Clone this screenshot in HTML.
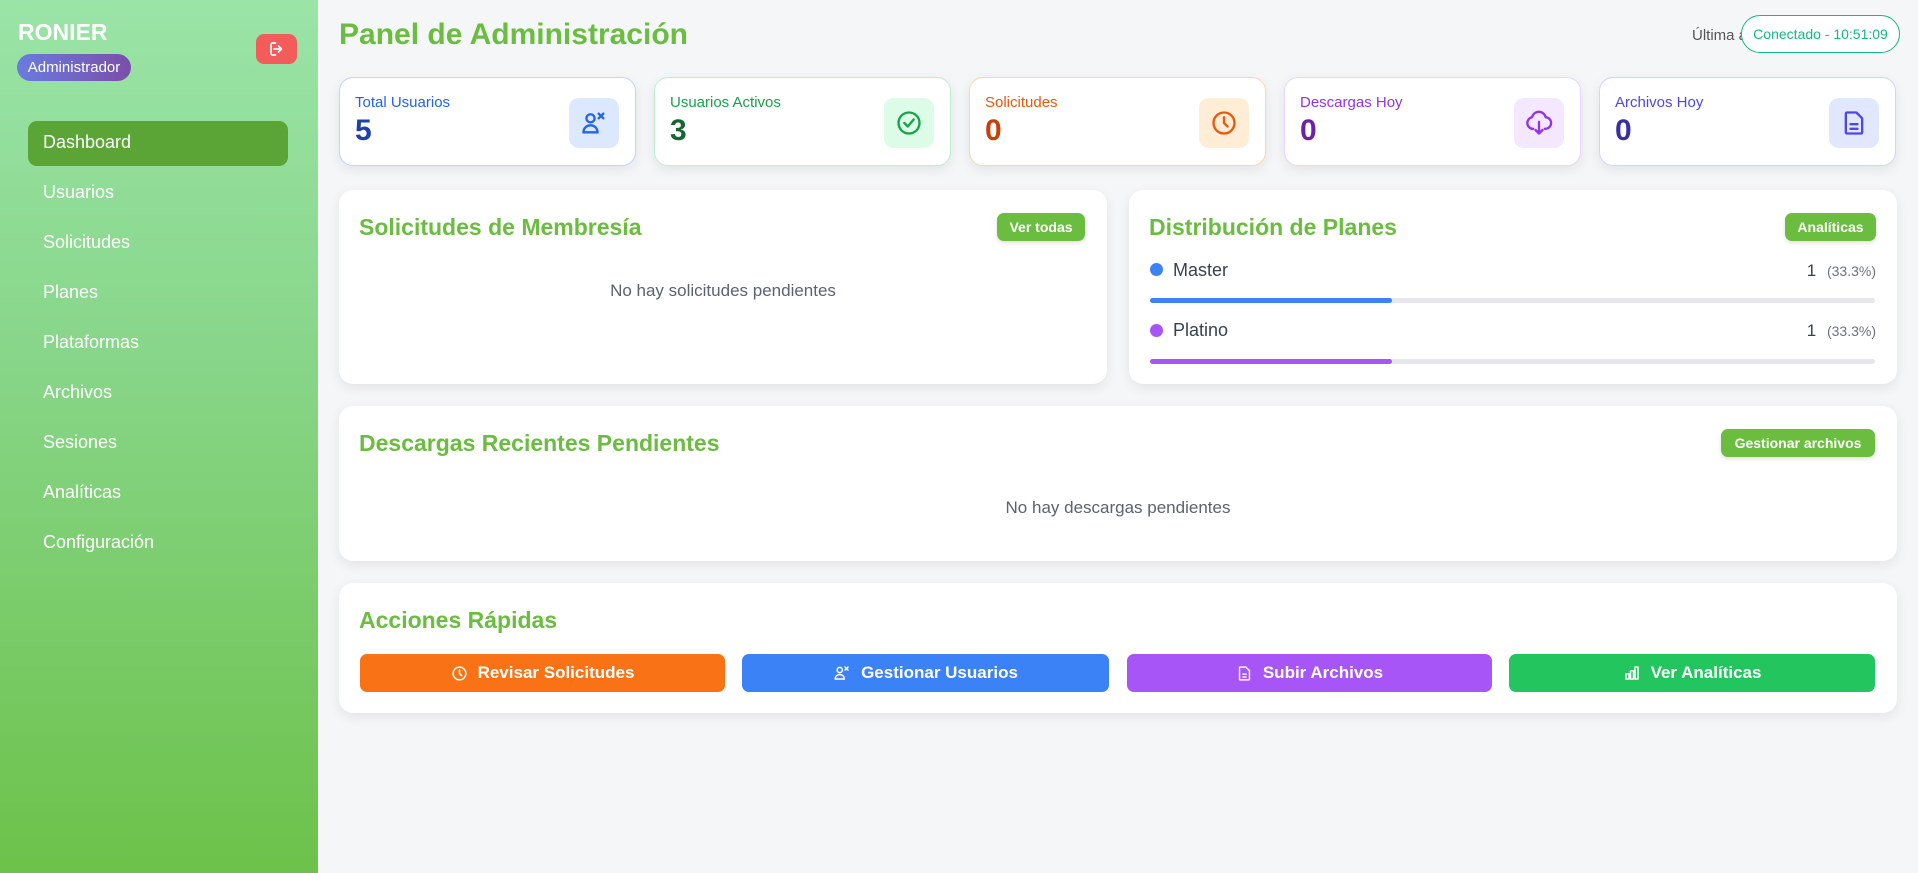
<!DOCTYPE html>
<html><head><meta charset="utf-8"><style>
*{box-sizing:border-box;margin:0;padding:0}
body{width:1918px;height:873px;overflow:hidden;font-family:"Liberation Sans",sans-serif;background:#f5f6f8;position:relative}
.sb{position:absolute;left:0;top:0;width:318px;height:873px;background:linear-gradient(180deg,#9ae4a7 0%,#88d68a 40%,#6cc24a 100%)}
.a{position:absolute}
.nav{position:absolute;left:43px;color:#fff;font-size:18px}
.card{position:absolute;background:#fff;border-radius:14px;box-shadow:0 4px 12px rgba(0,0,0,.08)}
.stat{top:77px;width:297px;height:89px;border:1px solid}
.stat .l{position:absolute;left:15px;top:16px;font-size:15px}
.stat .n{position:absolute;left:15px;top:36px;font-size:30px;font-weight:bold}
.stat .ic{position:absolute;right:16px;top:20px;width:50px;height:50px;border-radius:10px;display:flex;align-items:center;justify-content:center}
.h{position:absolute;left:20px;font-size:23px;font-weight:bold;color:#6abd3e}
.gb{position:absolute;background:#6abd3e;color:#fff;font-weight:bold;font-size:14px;border-radius:7px;display:flex;align-items:center;justify-content:center;box-shadow:0 2px 4px rgba(0,0,0,.12)}
.empty{position:absolute;left:0;right:0;text-align:center;color:#5b6270;font-size:17px}
.btn{position:absolute;top:654px;height:38px;border-radius:7px;color:#fff;font-weight:bold;font-size:17px;display:flex;align-items:center;justify-content:center;gap:10px}
.bar{position:absolute;left:1150px;width:725px;height:5px;border-radius:3px;background:#e5e7eb}
.bar i{display:block;height:5px;width:242px;border-radius:3px}
</style></head><body>
<div class="sb">
<div class="a" style="left:18px;top:19px;font-size:23px;font-weight:bold;color:#fff">RONIER</div>
<div class="a" style="left:17px;top:54px;width:114px;height:27px;border-radius:14px;background:linear-gradient(90deg,#6a7be0,#7b4fa8);color:#fff;font-size:15px;display:flex;align-items:center;justify-content:center">Administrador</div>
<div class="a" style="left:256px;top:34px;width:41px;height:30px;border-radius:8px;background:#f45b5b;display:flex;align-items:center;justify-content:center"><svg width="18" height="18" viewBox="0 0 24 24" fill="none" stroke="#fff" stroke-width="2.2" stroke-linecap="round" stroke-linejoin="round"><path d="M10 4H6a2 2 0 0 0-2 2v12a2 2 0 0 0 2 2h4M14 8l4 4-4 4M8 12h10"/></svg></div>
<div class="a" style="left:28px;top:121px;width:260px;height:45px;border-radius:9px;background:#5aa535"></div>
<div class="nav" style="top:132px">Dashboard</div>
<div class="nav" style="top:182px">Usuarios</div>
<div class="nav" style="top:232px">Solicitudes</div>
<div class="nav" style="top:282px">Planes</div>
<div class="nav" style="top:332px">Plataformas</div>
<div class="nav" style="top:382px">Archivos</div>
<div class="nav" style="top:432px">Sesiones</div>
<div class="nav" style="top:482px">Analíticas</div>
<div class="nav" style="top:532px">Configuración</div>
</div>

<div class="a" style="left:339px;top:18px;font-size:30px;font-weight:bold;color:#6abd3e">Panel de Administración</div>
<div class="a" style="left:1692px;top:27px;font-size:15px;color:#555">Última actualización: 10:51:09</div>
<div class="a" style="left:1741px;top:15px;width:159px;height:38px;border:1.5px solid #10b981;border-radius:19px;background:#fff;color:#10b981;font-size:14px;display:flex;align-items:center;justify-content:center">Conectado - 10:51:09</div>

<div class="card stat" style="left:339px;border-color:#bfd5fb"><div class="l" style="color:#2563eb">Total Usuarios</div><div class="n" style="color:#1e40af">5</div><div class="ic" style="background:#dbe8fe"><svg width="28" height="28" viewBox="0 0 24 24" fill="none" stroke="#2563eb" stroke-width="2" stroke-linecap="round"><circle cx="9" cy="8" r="3.5"/><path d="M3 20c0-4 3-6 6-6s6 2 6 6H3z"/><path d="M16 4l4 4M20 4l-4 4"/></svg></div></div>
<div class="card stat" style="left:654px;border-color:#bbf0cf"><div class="l" style="color:#16a34a">Usuarios Activos</div><div class="n" style="color:#166534">3</div><div class="ic" style="background:#dcfce7"><svg width="28" height="28" viewBox="0 0 24 24" fill="none" stroke="#16a34a" stroke-width="2" stroke-linecap="round" stroke-linejoin="round"><circle cx="12" cy="12" r="9"/><path d="M8 12l3 3 5-6"/></svg></div></div>
<div class="card stat" style="left:969px;border-color:#fed7a8"><div class="l" style="color:#ea580c">Solicitudes</div><div class="n" style="color:#c2410c">0</div><div class="ic" style="background:#ffedd5"><svg width="28" height="28" viewBox="0 0 24 24" fill="none" stroke="#ea580c" stroke-width="2" stroke-linecap="round"><circle cx="12" cy="12" r="9"/><path d="M12 7v5l3 3"/></svg></div></div>
<div class="card stat" style="left:1284px;border-color:#ead5fd"><div class="l" style="color:#9333ea">Descargas Hoy</div><div class="n" style="color:#6b21a8">0</div><div class="ic" style="background:#f3e8ff"><svg width="28" height="28" viewBox="0 0 24 24" fill="none" stroke="#9333ea" stroke-width="2" stroke-linecap="round" stroke-linejoin="round"><path d="M7 17a5 5 0 0 1-1-9.9A6 6 0 0 1 17.7 7 4.5 4.5 0 0 1 17 17"/><path d="M12 11v10M9 18l3 3 3-3"/></svg></div></div>
<div class="card stat" style="left:1599px;border-color:#cfd6fd"><div class="l" style="color:#4f46e5">Archivos Hoy</div><div class="n" style="color:#3730a3">0</div><div class="ic" style="background:#e0e7ff"><svg width="28" height="28" viewBox="0 0 24 24" fill="none" stroke="#4f46e5" stroke-width="2" stroke-linejoin="round" stroke-linecap="round"><path d="M6 3h8l5 5v12a1 1 0 0 1-1 1H6a1 1 0 0 1-1-1V4a1 1 0 0 1 1-1z"/><path d="M9 13h6M9 17h6"/></svg></div></div>

<div class="card" style="left:339px;top:190px;width:768px;height:194px">
<div class="h" style="top:24px">Solicitudes de Membresía</div>
<div class="gb" style="left:658px;top:23px;width:88px;height:28px">Ver todas</div>
<div class="empty" style="top:91px">No hay solicitudes pendientes</div>
</div>
<div class="card" style="left:1129px;top:190px;width:768px;height:194px">
<div class="h" style="top:24px">Distribución de Planes</div>
<div class="gb" style="left:656px;top:23px;width:91px;height:28px">Analíticas</div>
</div>
<div class="a" style="left:1150px;top:263px;width:13px;height:13px;border-radius:50%;background:#3b82f6"></div>
<div class="a" style="left:1173px;top:260px;font-size:18px;color:#374151">Master</div>
<div class="a" style="right:42px;top:261px;font-size:17px;color:#374151">1 <span style="font-size:14px;color:#6b7280;margin-left:6px">(33.3%)</span></div>
<div class="bar" style="top:298px"><i style="background:#3b82f6"></i></div>
<div class="a" style="left:1150px;top:324px;width:13px;height:13px;border-radius:50%;background:#a855f7"></div>
<div class="a" style="left:1173px;top:320px;font-size:18px;color:#374151">Platino</div>
<div class="a" style="right:42px;top:321px;font-size:17px;color:#374151">1 <span style="font-size:14px;color:#6b7280;margin-left:6px">(33.3%)</span></div>
<div class="bar" style="top:359px"><i style="background:#a855f7"></i></div>

<div class="card" style="left:339px;top:406px;width:1558px;height:155px">
<div class="h" style="top:24px">Descargas Recientes Pendientes</div>
<div class="gb" style="left:1382px;top:23px;width:154px;height:28px">Gestionar archivos</div>
<div class="empty" style="top:92px">No hay descargas pendientes</div>
</div>

<div class="card" style="left:339px;top:583px;width:1558px;height:130px">
<div class="h" style="top:24px">Acciones Rápidas</div>
</div>
<div class="btn" style="left:360px;width:365px;background:#f97316"><svg width="17" height="17" viewBox="0 0 24 24" fill="none" stroke="#fff" stroke-width="2.2" stroke-linecap="round"><circle cx="12" cy="12" r="9"/><path d="M12 7v5l3 3"/></svg>Revisar Solicitudes</div>
<div class="btn" style="left:742px;width:367px;background:#3b82f6"><svg width="18" height="18" viewBox="0 0 24 24" fill="none" stroke="#fff" stroke-width="2" stroke-linecap="round"><circle cx="9" cy="8" r="3.5"/><path d="M3 20c0-4 3-6 6-6s6 2 6 6H3z"/><path d="M16 4l4 4M20 4l-4 4"/></svg>Gestionar Usuarios</div>
<div class="btn" style="left:1127px;width:365px;background:#a855f7"><svg width="17" height="17" viewBox="0 0 24 24" fill="none" stroke="#fff" stroke-width="2" stroke-linejoin="round"><path d="M6 3h8l5 5v12a1 1 0 0 1-1 1H6a1 1 0 0 1-1-1V4a1 1 0 0 1 1-1z"/><path d="M9 13h6M9 17h6"/></svg>Subir Archivos</div>
<div class="btn" style="left:1509px;width:366px;background:#22c55e"><svg width="18" height="18" viewBox="0 0 24 24" fill="none" stroke="#fff" stroke-width="2" stroke-linejoin="round"><path d="M4 20V13h4v7zM10 20V9h4v11zM16 20V4h4v16z"/></svg>Ver Analíticas</div>
</body></html>
